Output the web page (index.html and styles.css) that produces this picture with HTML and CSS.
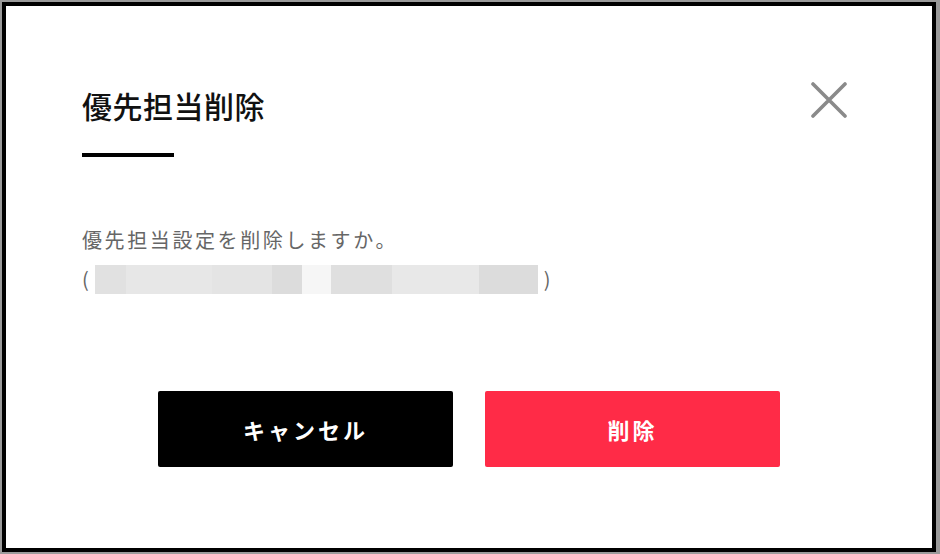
FILE: index.html
```html
<!DOCTYPE html>
<html lang="ja">
<head>
<meta charset="utf-8">
<title>優先担当削除</title>
<link rel="stylesheet" href="styles.css">
</head>
<body>
<div class="frame">
  <div class="dialog">
    <div class="header">
      <div class="title-wrap">
        <h1 class="title">優先担当削除</h1>
        <div class="title-bar"></div>
      </div>
      <button class="close" aria-label="閉じる">
        <svg width="36" height="36" viewBox="0 0 36 36">
          <path d="M2 2 L34 34 M34 2 L2 34" stroke="#8a8a8a" stroke-width="3.6" stroke-linecap="round" fill="none"/>
        </svg>
      </button>
    </div>
    <div class="message">
      <p class="msg-line">優先担当設定を削除しますか。</p>
      <p class="msg-line name-line">
        <span class="paren">(</span>
        <span class="masked">
          <span class="seg s1"></span><span class="seg s2"></span><span class="seg s3"></span><span class="seg s4"></span><span class="seg s5"></span><span class="seg s6"></span><span class="seg s7"></span><span class="seg s8"></span>
        </span>
        <span class="paren">)</span>
      </p>
    </div>
    <div class="actions">
      <button class="btn btn-cancel">キャンセル</button>
      <button class="btn btn-delete">削除</button>
    </div>
  </div>
</div>
</body>
</html>
```

FILE: styles.css
```css
html, body {
  margin: 0;
  padding: 0;
}
body {
  background: #9a9a9a;
  width: 940px;
  height: 554px;
  overflow: hidden;
  font-family: "Noto Sans CJK JP", "Noto Sans", sans-serif;
}
.frame {
  box-sizing: border-box;
  margin: 2px 4px 2px 2px;
  width: 934px;
  height: 550px;
  border: 4px solid #000;
  background: #fff;
}
.dialog {
  padding: 79px 85px 0 76px;
}
.header {
  display: flex;
  justify-content: space-between;
  align-items: flex-start;
}
.title {
  margin: 0;
  font-size: 30px;
  line-height: 40px;
  font-weight: 500;
  color: #111;
  letter-spacing: 0.5px;
}
.title-bar {
  margin-top: 28px;
  width: 92px;
  height: 4px;
  background: #000;
}
.close {
  margin-top: -3px;
  padding: 0;
  border: 0;
  background: none;
  width: 36px;
  height: 36px;
  cursor: pointer;
}
.close svg {
  display: block;
}
.message {
  margin-top: 67px;
  color: #666;
  font-size: 20px;
}
.msg-line {
  margin: 0;
  line-height: 32px;
  letter-spacing: 2.6px;
}
.name-line {
  margin-top: 7px;
  display: flex;
  align-items: center;
  gap: 6px;
}
.paren {
  letter-spacing: 0;
}
.masked {
  display: flex;
  height: 29px;
}
.seg {
  display: block;
  height: 29px;
}
.s1 { width: 31px; background: #e1e1e1; }
.s2 { width: 86px; background: #e7e7e7; }
.s3 { width: 60px; background: #e4e4e4; }
.s4 { width: 30px; background: #dcdcdc; }
.s5 { width: 29px; background: #f6f6f6; }
.s6 { width: 61px; background: #dfdfdf; }
.s7 { width: 87px; background: #e8e8e8; }
.s8 { width: 59px; background: #dcdcdc; }
.actions {
  margin-top: 96px;
  display: flex;
  justify-content: center;
  gap: 32px;
  margin-left: -76px;
  margin-right: -85px;
}
.btn {
  width: 295px;
  height: 76px;
  border: 0;
  border-radius: 2px;
  color: #fff;
  font-family: "Noto Sans CJK JP", "Noto Sans", sans-serif;
  font-size: 22px;
  font-weight: 700;
  letter-spacing: 3px;
  cursor: pointer;
}
.btn-cancel {
  background: #000;
}
.btn-delete {
  background: #ff2b47;
}
```
